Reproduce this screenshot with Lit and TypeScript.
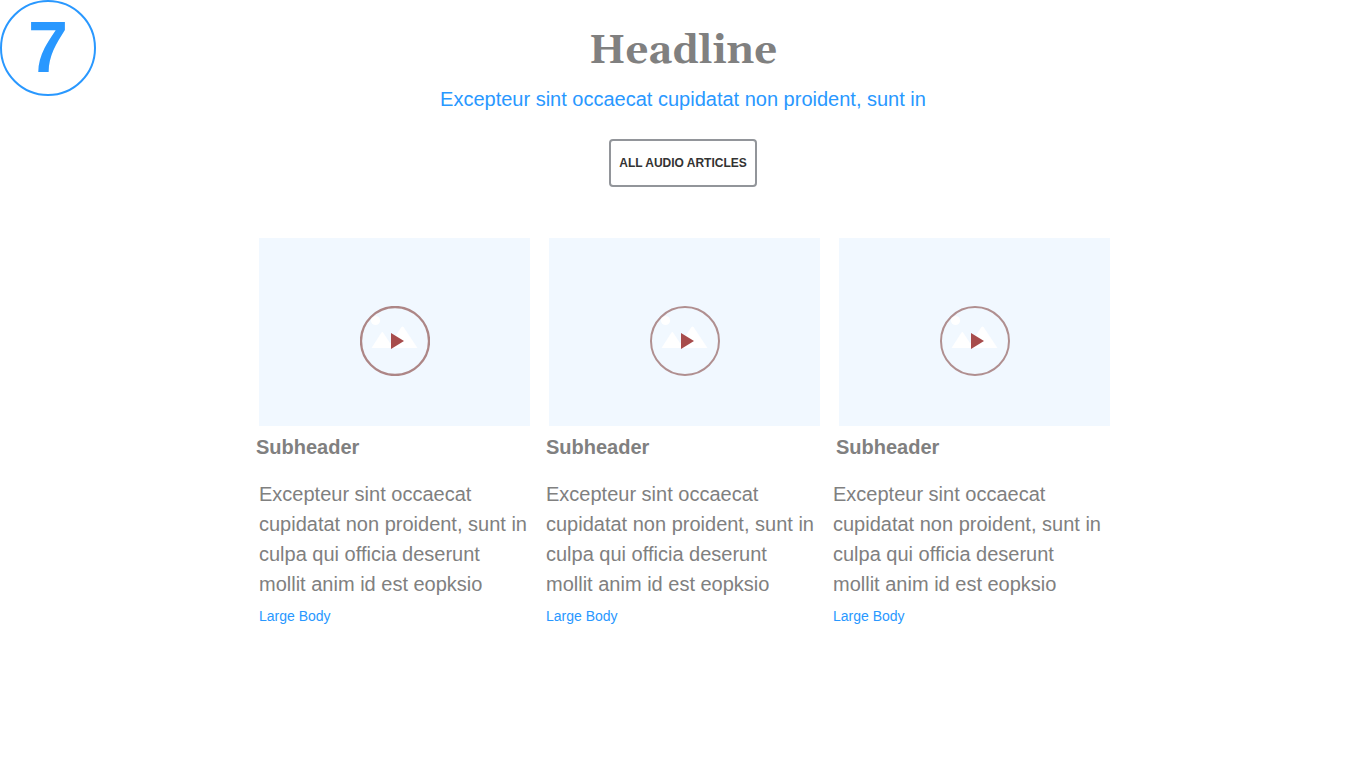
import { LitElement, html, css } from "lit";
import { customElement } from "lit/decorators.js";
import { classMap } from "lit/directives/class-map.js";

const articles = [
  { title: "Subheader", link: "Large Body", strong: true },
  { title: "Subheader", link: "Large Body", strong: false },
  { title: "Subheader", link: "Large Body", strong: false },
];

const summary =
  "Excepteur sint occaecat cupidatat non proident, sunt in culpa qui officia deserunt mollit anim id est eopksio";

@customElement("app-root")
export class AppRoot extends LitElement {
  static styles = css`
    :host {
      display: block;
      min-height: 100vh;
      position: relative;
      background: #fff;
      color: #808080;
      font-family: "Liberation Sans", Arial, sans-serif;
      font-size: 20px;
      line-height: 30px;
    }
    * {
      box-sizing: border-box;
    }
    h1,
    h2,
    p {
      margin: 0;
    }
    .badge {
      position: absolute;
      top: 0;
      left: 0;
      width: 96px;
      height: 96px;
      border: 2px solid #2998ff;
      border-radius: 50%;
      color: #2998ff;
      font-size: 72px;
      font-weight: 700;
      line-height: 90px;
      text-align: center;
    }
    .intro {
      display: flex;
      flex-direction: column;
      align-items: center;
      padding-top: 24px;
      text-align: center;
    }
    h1 {
      font-family: Georgia, Gelasio, serif;
      font-size: 40px;
      font-weight: 700;
      line-height: 56px;
    }
    .lead {
      margin-top: 4px;
      color: #2998ff;
    }
    .all {
      margin-top: 25px;
      height: 48px;
      padding: 0 8px;
      border: 2px solid #92959a;
      border-radius: 4px;
      background: #fff;
      color: #333;
      font: 700 12px/16px "Liberation Sans", Arial, sans-serif;
      cursor: pointer;
    }
    .articles {
      max-width: 854px;
      margin: 51px auto 0;
    }
    .row {
      display: grid;
      grid-template-columns: repeat(3, minmax(0, 1fr));
    }
    .media {
      gap: 19px;
      padding-left: 3px;
    }
    .titles {
      gap: 19px;
      padding-right: 3px;
      margin-top: 6px;
    }
    .texts {
      gap: 13px;
      padding: 0 3px;
      margin-top: 17px;
    }
    .summary {
      padding-right: 4px;
    }
    .thumb {
      height: 188px;
      padding-top: 18px;
      background: #f1f8ff;
      display: flex;
      align-items: center;
      justify-content: center;
    }
    .play {
      width: 70px;
      height: 70px;
      padding: 0;
      border: 0;
      border-radius: 50%;
      background: none;
      cursor: pointer;
    }
    .play svg {
      display: block;
    }
    .ring {
      fill: none;
      stroke: #b08f90;
      stroke-width: 2;
    }
    .strong .ring {
      stroke: #ad8686;
      stroke-width: 2.3;
    }
    h2 {
      font-size: 20px;
      line-height: 30px;
      font-weight: 700;
    }
    .more {
      display: block;
      width: fit-content;
      margin-top: 6px;
      color: #2998ff;
      font-size: 14px;
      line-height: 22px;
      text-decoration: none;
    }
  `;

  render() {
    return html`
      <div class="badge">7</div>
      <header class="intro">
        <h1>Headline</h1>
        <p class="lead">Excepteur sint occaecat cupidatat non proident, sunt in</p>
        <button class="all" type="button">ALL AUDIO ARTICLES</button>
      </header>
      <main class="articles">
        <div class="row media">
          ${articles.map(
            (a) => html`
              <div class="thumb">
                <button
                  type="button"
                  aria-label="Play"
                  class=${classMap({ play: true, strong: a.strong })}
                >
                  <svg width="70" height="70" viewBox="0 0 70 70" aria-hidden="true">
                    <circle cx="15.5" cy="14.5" r="4.6" fill="#fff" />
                    <path
                      d="M11.5 42 21.3 26.8Q22.3 25.4 23.3 26.8L29 35.5 33 42ZM27 42 41.3 21.2Q42.5 19.6 43.7 21.2L57.5 42Z"
                      fill="#fff"
                    />
                    <circle class="ring" cx="35" cy="35" r="34" />
                    <path d="M31 27 44 35 31 43Z" fill="#a74c4c" />
                  </svg>
                </button>
              </div>
            `
          )}
        </div>
        <div class="row titles">${articles.map((a) => html`<h2>${a.title}</h2>`)}</div>
        <div class="row texts">
          ${articles.map(
            (a) => html`
              <div>
                <p class="summary">${summary}</p>
                <a class="more" href="#">${a.link}</a>
              </div>
            `
          )}
        </div>
      </main>
    `;
  }
}
